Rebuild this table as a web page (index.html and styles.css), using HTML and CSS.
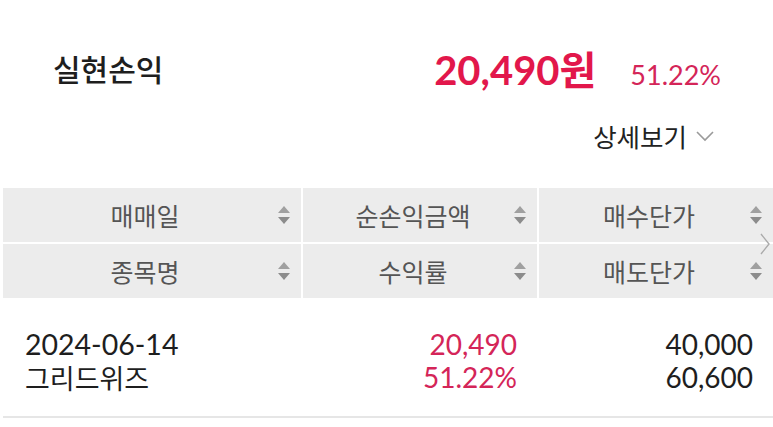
FILE: index.html
```html
<!DOCTYPE html>
<html lang="ko">
<head>
<meta charset="utf-8">
<link rel="stylesheet" href="styles.css">
</head>
<body>
<div class="page">
  <section class="summary">
    <div class="title">실현손익</div>
    <div class="amounts">
      <span class="amount">20,490원</span>
      <span class="rate">51.22%</span>
    </div>
  </section>
  <div class="detail-row">
    <span class="detail">상세보기</span>
    <svg class="chev" width="20" height="12" viewBox="0 0 20 12"><path d="M2 2 L10 10 L18 2" fill="none" stroke="#9a9a9a" stroke-width="1.6"/></svg>
  </div>
  <div class="table">
    <div class="head">
      <div class="hcell"><span>매매일</span><i class="sort"></i></div>
      <div class="hcell"><span>순손익금액</span><i class="sort"></i></div>
      <div class="hcell"><span>매수단가</span><i class="sort"></i></div>
      <div class="hcell"><span>종목명</span><i class="sort"></i></div>
      <div class="hcell"><span>수익률</span><i class="sort"></i></div>
      <div class="hcell"><span>매도단가</span><i class="sort"></i></div>
    </div>
    <svg class="more" width="12" height="24" viewBox="0 0 12 24"><path d="M2 2 L10 12 L2 22" fill="none" stroke="#aaaaaa" stroke-width="1.4"/></svg>
    <div class="row">
      <div class="cell left"><div class="line date">2024-06-14</div><div class="line kr">그리드위즈</div></div>
      <div class="cell right red"><div class="line">20,490</div><div class="line">51.22%</div></div>
      <div class="cell right"><div class="line">40,000</div><div class="line">60,600</div></div>
    </div>
  </div>
</div>
</body>
</html>
```
FILE: styles.css
```css
* { box-sizing: border-box; }
html, body { margin: 0; padding: 0; background: #fff; }
body {
  font-family: Lato, "Noto Sans CJK KR", sans-serif;
  color: #222;
  width: 773px;
  height: 427px;
  overflow: hidden;
}
.page { padding-left: 3px; }
.summary {
  display: flex;
  align-items: center;
  justify-content: space-between;
  height: 60px;
  margin-top: 38px;
  padding-left: 50px;
  padding-right: 52px;
}
.title {
  font-family: "Noto Sans CJK KR", sans-serif;
  font-size: 30px;
  font-weight: 500;
  color: #1e1e1e;
}
.amounts { display: flex; align-items: baseline; gap: 34px; }
.amount {
  font-family: Lato, "Noto Sans CJK KR", sans-serif;
  font-weight: 700;
  font-size: 40px;
  color: #e2174b;
}
.rate {
  font-size: 27px;
  color: #d42558;
}
.detail-row {
  display: flex;
  align-items: center;
  justify-content: flex-end;
  gap: 8px;
  height: 34px;
  margin-top: 20px;
  padding-right: 58px;
}
.detail {
  font-family: "Noto Sans CJK KR", sans-serif;
  font-size: 25.5px;
  color: #222;
}
.chev { margin-top: 2px; }
.table { position: relative; margin-top: 36px; }
.head {
  display: grid;
  grid-template-columns: 298px 234px 234px;
  grid-auto-rows: 54px;
  gap: 2px;
}
.hcell {
  background: #ececec;
  display: flex;
  align-items: center;
  position: relative;
  padding-right: 14px;
}
.hcell span {
  flex: 1;
  text-align: center;
  font-family: "Noto Sans CJK KR", sans-serif;
  font-size: 25px;
  color: #555;
}
.sort {
  position: absolute;
  right: 11px;
  top: 50%;
  width: 12px;
  height: 18px;
  margin-top: -9px;
}
.sort::before, .sort::after {
  content: "";
  position: absolute;
  left: 0;
  border-left: 6px solid transparent;
  border-right: 6px solid transparent;
}
.sort::before { top: 0; border-bottom: 7.5px solid #a0a0a0; }
.sort::after { bottom: 0; border-top: 7.5px solid #8c8c8c; }
.more { position: absolute; right: 2px; top: 44px; }
.row {
  display: grid;
  grid-template-columns: 298px 234px 234px;
  gap: 2px;
  padding: 30px 0 22px;
  border-bottom: 2px solid #e6e6e6;
  width: 770px;
}
.cell { font-size: 28px; color: #1e1e1e; }
.line { height: 33px; line-height: 33px; white-space: nowrap; }
.cell .date { font-size: 28.5px; }
.cell.left { padding-left: 22px; }
.cell.right { text-align: right; padding-right: 20px; }
.cell.red { color: #d42558; }
.kr { font-family: "Noto Sans CJK KR", sans-serif; font-size: 27px; line-height: 31px; padding-top: 1px; }
```
